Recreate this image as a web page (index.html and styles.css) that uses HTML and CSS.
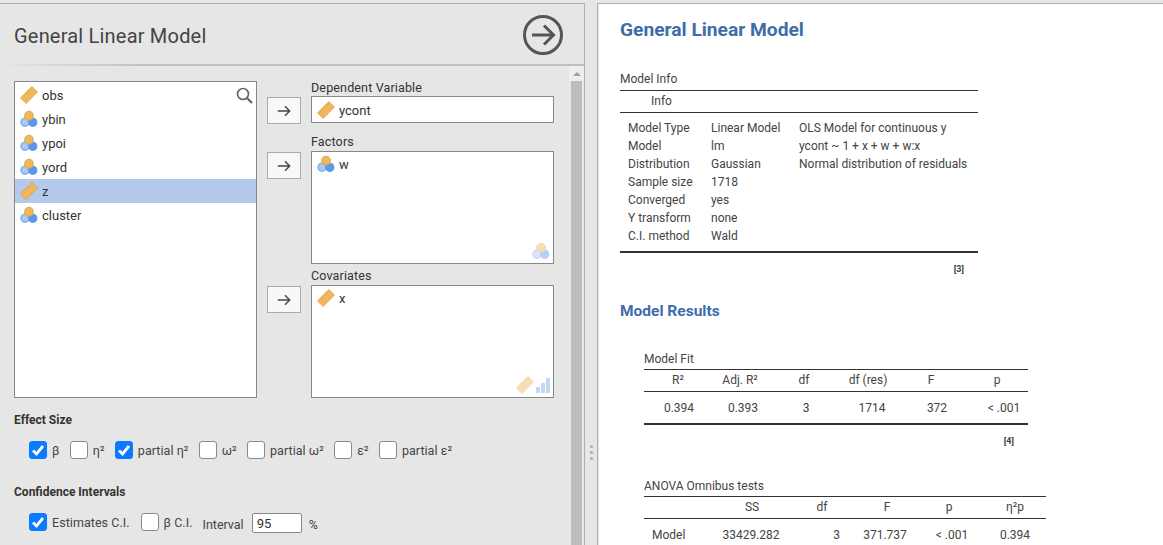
FILE: index.html
```html
<!DOCTYPE html>
<html lang="en">
<head>
    <meta charset="UTF-8">
    <title>General Linear Model</title>
    <link rel="stylesheet" href="styles.css">
</head>
<body>
    <svg class="icon-defs" width="0" height="0">
        <symbol id="ruler" viewBox="0 0 18 18">
            <path d="M11.900 .6 17.400 6.100 6.100 17.400 .6 11.900z" fill="#f0b85c" stroke="#e5a53e" stroke-width="1" stroke-linejoin="round"/>
            <path d="M3.100 9.400 4.500 10.800M5.200 7.300 6.600 8.700M7.300 5.200 8.700 6.600M9.400 3.100 10.800 4.500" stroke="#d9993a" stroke-width=".7"/>
        </symbol>
        <symbol id="nominal" viewBox="0 0 18 18">
            <circle cx="5" cy="12.200" r="4.100" fill="#a9c7f2" stroke="#6f9fe6" stroke-width="1"/>
            <circle cx="12.800" cy="12.300" r="4.100" fill="#5f97e8" stroke="#5f97e8" stroke-width="1"/>
            <circle cx="9" cy="5.700" r="4.400" fill="#edb85f" stroke="#dda648" stroke-width="1"/>
        </symbol>
        <symbol id="move" viewBox="0 0 14 12">
            <path d="M.8 6H12.700M8 1.300 12.700 6 8 10.700" fill="none" stroke="#444" stroke-width="1.400"/>
        </symbol>
        <symbol id="tick" viewBox="0 0 18 18">
            <path d="M4 9.500 7.500 13 14 5" fill="none" stroke="#fff" stroke-width="2.800"/>
        </symbol>
    </svg>

    <div class="app">
        <section class="options">
            <div class="options-head">
                <h1>General Linear Model</h1>
                <svg class="run-icon" width="42" height="42" viewBox="0 0 42 42">
                    <circle cx="21" cy="21" r="18.500" fill="none" stroke="#555" stroke-width="3"/>
                    <path d="M10 21H31M22 11.500 31.500 21 22 30.500" fill="none" stroke="#555" stroke-width="3"/>
                </svg>
            </div>

            <div class="options-body">
                <div class="options-content">
                    <div class="supplier">
                        <div class="var-list">
                            <svg class="search-icon" width="17" height="17" viewBox="0 0 17 17">
                                <circle cx="7" cy="7" r="5.500" fill="none" stroke="#666" stroke-width="1.700"/>
                                <path d="M11 11 16 16" stroke="#666" stroke-width="2.200"/>
                            </svg>
                            <div class="var-row"><svg class="var-icon"><use href="#ruler"/></svg>obs</div>
                            <div class="var-row"><svg class="var-icon"><use href="#nominal"/></svg>ybin</div>
                            <div class="var-row"><svg class="var-icon"><use href="#nominal"/></svg>ypoi</div>
                            <div class="var-row"><svg class="var-icon"><use href="#nominal"/></svg>yord</div>
                            <div class="var-row selected"><svg class="var-icon"><use href="#ruler"/></svg>z</div>
                            <div class="var-row"><svg class="var-icon"><use href="#nominal"/></svg>cluster</div>
                        </div>

                        <div class="targets">
                            <div class="target target-dep">
                                <div class="target-label">Dependent Variable</div>
                                <button class="move-btn" type="button"><svg width="14" height="12"><use href="#move"/></svg></button>
                                <div class="target-box box-dep">
                                    <div class="var-row"><svg class="var-icon"><use href="#ruler"/></svg>ycont</div>
                                </div>
                            </div>
                            <div class="target">
                                <div class="target-label">Factors</div>
                                <button class="move-btn" type="button"><svg width="14" height="12"><use href="#move"/></svg></button>
                                <div class="target-box box-factors">
                                    <div class="var-row"><svg class="var-icon"><use href="#nominal"/></svg>w</div>
                                    <div class="box-hint"><svg class="var-icon"><use href="#nominal"/></svg></div>
                                </div>
                            </div>
                            <div class="target">
                                <div class="target-label">Covariates</div>
                                <button class="move-btn" type="button"><svg width="14" height="12"><use href="#move"/></svg></button>
                                <div class="target-box box-covs">
                                    <div class="var-row"><svg class="var-icon"><use href="#ruler"/></svg>x</div>
                                    <div class="box-hint">
                                        <svg class="var-icon"><use href="#ruler"/></svg>
                                        <svg class="bars-icon" width="14" height="15" viewBox="0 0 14 15">
                                            <path d="M0 9H4V15H0zM5 5H9V15H5zM10 0H14V15H10z" fill="#7ea9ea"/>
                                        </svg>
                                    </div>
                                </div>
                            </div>
                        </div>
                    </div>

                    <h2 class="group-title">Effect Size</h2>
                    <div class="check-row">
                        <label class="check"><span class="box on"><svg width="18" height="18"><use href="#tick"/></svg></span>β</label>
                        <label class="check"><span class="box"></span>η²</label>
                        <label class="check"><span class="box on"><svg width="18" height="18"><use href="#tick"/></svg></span>partial η²</label>
                        <label class="check"><span class="box"></span>ω²</label>
                        <label class="check"><span class="box"></span>partial ω²</label>
                        <label class="check"><span class="box"></span>ε²</label>
                        <label class="check"><span class="box"></span>partial ε²</label>
                    </div>

                    <h2 class="group-title group-ci">Confidence Intervals</h2>
                    <div class="check-row ci-row">
                        <label class="check"><span class="box on"><svg width="18" height="18"><use href="#tick"/></svg></span>Estimates C.I.</label>
                        <label class="check"><span class="box"></span>β C.I.</label>
                        <span class="interval">Interval</span>
                        <input class="interval-input" type="text" value="95">
                        <span class="interval-unit">%</span>
                    </div>
                </div>

                <div class="scrollbar">
                    <div class="scroll-up"><span class="scroll-arrow"></span></div>
                    <div class="scroll-thumb"></div>
                </div>
            </div>
        </section>

        <div class="splitter"><span></span><span></span><span></span></div>

        <section class="results">
            <h1 class="res-title">General Linear Model</h1>

            <div class="res-table table-info">
                <div class="table-name">Model Info</div>
                <table>
                    <colgroup>
                        <col class="info-1"><col class="info-2"><col class="info-3">
                    </colgroup>
                    <thead>
                        <tr><th class="info-head" colspan="3">Info</th></tr>
                    </thead>
                    <tbody>
                        <tr class="first"><td class="c1">Model Type</td><td>Linear Model</td><td>OLS Model for continuous y</td></tr>
                        <tr><td class="c1">Model</td><td>lm</td><td>ycont ~ 1 + x + w + w:x</td></tr>
                        <tr><td class="c1">Distribution</td><td>Gaussian</td><td>Normal distribution of residuals</td></tr>
                        <tr><td class="c1">Sample size</td><td>1718</td><td></td></tr>
                        <tr><td class="c1">Converged</td><td>yes</td><td></td></tr>
                        <tr><td class="c1">Y transform</td><td>none</td><td></td></tr>
                        <tr class="last"><td class="c1">C.I. method</td><td>Wald</td><td></td></tr>
                    </tbody>
                </table>
                <div class="ref">[3]</div>
            </div>

            <h2 class="res-heading">Model Results</h2>

            <div class="res-table table-fit">
                <div class="table-name">Model Fit</div>
                <table class="num-table">
                    <colgroup>
                        <col class="fit-1"><col class="fit-2"><col class="fit-3"><col class="fit-4"><col class="fit-5"><col class="fit-6">
                    </colgroup>
                    <thead>
                        <tr><th>R²</th><th>Adj. R²</th><th>df</th><th>df (res)</th><th>F</th><th>p</th></tr>
                    </thead>
                    <tbody>
                        <tr class="first last"><td>0.394</td><td>0.393</td><td>3</td><td>1714</td><td>372</td><td>&lt; .001</td></tr>
                    </tbody>
                </table>
                <div class="ref">[4]</div>
            </div>

            <div class="res-table table-anova">
                <div class="table-name">ANOVA Omnibus tests</div>
                <table class="num-table">
                    <colgroup>
                        <col class="an-1"><col class="an-2"><col class="an-3"><col class="an-4"><col class="an-5"><col class="an-6">
                    </colgroup>
                    <thead>
                        <tr><th></th><th>SS</th><th>df</th><th>F</th><th>p</th><th>η²p</th></tr>
                    </thead>
                    <tbody>
                        <tr class="first"><td class="row-name">Model</td><td>33429.282</td><td class="an-df">3</td><td>371.737</td><td>&lt; .001</td><td>0.394</td></tr>
                    </tbody>
                </table>
            </div>
        </section>
    </div>
</body>
</html>
```

FILE: styles.css
```css
html, body {
    margin: 0;
    padding: 0;
    height: 100%;
    overflow: hidden;
}

body {
    font-family: Roboto, Arial, sans-serif;
    background-color: #e6e6e6;
    color: #333;
}

.icon-defs {
    display: block;
    height: 0;
}

.app {
    display: flex;
    height: 542px;
    margin-top: 3px;
    overflow: hidden;
}

/* options panel */
.options {
    width: 585px;
    flex: none;
    box-sizing: border-box;
    border-top: 1px solid #b0b0b0;
    border-right: 1px solid #b0b0b0;
}

.options-head {
    display: flex;
    align-items: center;
    justify-content: space-between;
    height: 60px;
    padding: 0 20px 0 14px;
    border-bottom: 2px solid;
    border-image: linear-gradient(to right, #e6e6e6, #c0c0c0 25%) 1;
}

.options-head h1 {
    margin: 3px 0 0;
    font-size: 20px;
    font-weight: 400;
    letter-spacing: .2px;
    color: #444;
}

.run-icon {
    margin-top: 2px;
}

.options-body {
    display: flex;
    height: 480px;
}

.options-content {
    flex: 1;
    padding: 15px 0 0 14px;
    overflow: hidden;
}

.scrollbar {
    width: 15px;
    flex: none;
    background-color: #e8e8e8;
}

.scroll-up {
    height: 15px;
    background-color: #eeeeee;
    display: flex;
    justify-content: center;
    align-items: center;
}

.scroll-arrow {
    width: 0;
    height: 0;
    border-left: 4px solid transparent;
    border-right: 4px solid transparent;
    border-bottom: 4px solid #a0a0a0;
}

.scroll-thumb {
    width: 11px;
    height: 470px;
    margin-left: 2px;
    background-color: #bdbdbd;
}

.supplier {
    display: flex;
    height: 317px;
    gap: 10px;
}

.var-list {
    position: relative;
    width: 243px;
    box-sizing: border-box;
    padding-top: 1px;
    background: white;
    border: 1px solid #888;
}

.search-icon {
    position: absolute;
    top: 5px;
    right: 3px;
}

.var-row {
    display: flex;
    align-items: center;
    height: 24px;
    padding-left: 5px;
    font-size: 13px;
    color: #333;
}

.var-row.selected {
    background-color: #b4c9ec;
}

.var-icon {
    width: 18px;
    height: 18px;
    margin-right: 4px;
    flex: none;
}

.targets {
    display: flex;
    flex-direction: column;
    gap: 5px;
    margin-top: -1px;
}

.target-dep {
    margin-bottom: 6px;
}

.target {
    display: grid;
    grid-template-columns: 34px 243px;
    column-gap: 10px;
    align-items: start;
}

.target-label {
    grid-column: 2;
    height: 16px;
    font-size: 12.500px;
    line-height: 13px;
    letter-spacing: .15px;
}

.target-dep .target-label {
    height: 15px;
    margin-top: 1px;
}

.move-btn {
    width: 34px;
    height: 27px;
    margin-top: 1px;
    padding: 0;
    display: flex;
    align-items: center;
    justify-content: center;
    background-color: #f8f8f8;
    border: 1px solid #aaa;
}

.target-box {
    position: relative;
    box-sizing: border-box;
    background: white;
    border: 1px solid #888;
}

.box-dep {
    height: 27px;
}

.box-dep .var-row {
    height: 25px;
    padding-top: 1px;
    box-sizing: border-box;
}

.box-factors {
    height: 113px;
}

.box-covs {
    height: 113px;
}

.box-hint {
    position: absolute;
    right: 3px;
    bottom: 3px;
    display: flex;
    align-items: flex-end;
    opacity: .45;
}

.box-hint .var-icon {
    margin-right: 0;
}

.bars-icon {
    margin-left: 2px;
    margin-bottom: 1px;
}

.group-title {
    margin: 15px 0 0;
    font-size: 12px;
    line-height: 15px;
    font-weight: 700;
    color: #333;
}

.group-ci {
    margin-top: 25px;
}

.check-row {
    display: flex;
    align-items: center;
    height: 20px;
    margin: 12px 0 0 15px;
}

.check {
    display: flex;
    align-items: center;
    margin-right: 10.300px;
    font-size: 12.500px;
    letter-spacing: .05px;
    color: #444;
}

.ci-row .check {
    margin-right: 11px;
}

.box {
    width: 18px;
    height: 18px;
    box-sizing: border-box;
    flex: none;
    margin-right: 5px;
    background: white;
    border: 1px solid #8a8a8a;
    border-radius: 3px;
    overflow: hidden;
}

.box svg {
    display: block;
    margin: -1px;
}

.box.on {
    background-color: #0a7bff;
    border-color: #0a7bff;
}

.interval {
    font-size: 12.500px;
    color: #444;
    margin: 4px 0 0 -1px;
}

.interval-input {
    width: 50px;
    height: 20px;
    box-sizing: border-box;
    align-self: flex-start;
    margin: 1px 7px 0 8px;
    padding: 0 4px;
    font-family: Roboto, Arial, sans-serif;
    font-size: 13px;
    color: #333;
    border: 1px solid #888;
    border-radius: 2px;
    background: white;
}

.interval-unit {
    font-size: 12.500px;
    color: #444;
    margin-top: 4px;
}

/* drag handle between the panels */
.splitter {
    width: 12px;
    flex: none;
    display: flex;
    flex-direction: column;
    align-items: center;
    gap: 3px;
    padding-top: 442px;
}

.splitter span {
    width: 3px;
    height: 3px;
    border-radius: 50%;
    background-color: #aaa;
}

/* results */
.results {
    flex: 1;
    padding: 14px 0 0 22px;
    background: white;
    border-top: 1px solid #b0b0b0;
    border-left: 1px solid #b0b0b0;
    box-shadow: inset 1px 0 0 #e6e6e6;
    font-size: 12px;
    color: #444;
}

.res-title {
    margin: 0;
    font-size: 19.200px;
    line-height: 24px;
    font-weight: 700;
    color: #3e6da9;
}

.res-heading {
    margin: 26px 0 0;
    font-size: 15.500px;
    line-height: 20px;
    font-weight: 700;
    color: #3e6da9;
}

.res-table table {
    border-collapse: collapse;
    table-layout: fixed;
    width: 100%;
    border-top: 1px solid #333;
}

.table-name {
    height: 16px;
    line-height: 16px;
    padding-bottom: 3px;
}

.table-fit .table-name,
.table-anova .table-name {
    padding-bottom: 2px;
}

.table-info {
    width: 358px;
    margin-top: 29px;
}

.table-fit {
    width: 384px;
    margin: 30px 0 0 24px;
}

.table-anova {
    width: 402px;
    margin: 31px 0 0 24px;
}

th {
    height: 20px;
    padding: 0 0 1px;
    font-weight: 400;
    border-bottom: 1px solid #333;
}

.info-head {
    text-align: left;
    padding-left: 31px;
}

td {
    height: 18px;
    padding: 0;
    white-space: nowrap;
}

tr.first td {
    padding-top: 6px;
}

tr.last td {
    padding-bottom: 6px;
    border-bottom: 2px solid #333;
}

.c1 {
    padding-left: 8px;
}

.info-1 { width: 91px; }
.info-2 { width: 88px; }
.info-3 { width: 179px; }

.num-table th, .num-table td {
    text-align: center;
}

.num-table tr.first td {
    height: 21px;
    padding-top: 5px;
    padding-bottom: 5px;
}

.fit-1 { width: 68px; }
.fit-2 { width: 56px; }
.fit-3 { width: 72px; }
.fit-4 { width: 56px; }
.fit-5 { width: 70px; }
.fit-6 { width: 62px; }

/* values sit a little right of their column headers */
.table-fit td:nth-child(1) { padding-left: 2px; }
.table-fit td:nth-child(2) { padding-left: 6px; }
.table-fit td:nth-child(3) { padding-left: 4px; }
.table-fit td:nth-child(4) { padding-left: 8px; }
.table-fit td:nth-child(5) { padding-left: 12px; }
.table-fit td:nth-child(6) { padding-left: 14px; }

.an-1 { width: 72px; }
.an-2 { width: 72px; }
.an-3 { width: 68px; }
.an-4 { width: 62px; }
.an-5 { width: 62px; }
.an-6 { width: 66px; }

.num-table .row-name {
    text-align: left;
    padding-left: 8px;
}

.num-table .an-df {
    text-align: right;
    padding-right: 16px;
}

.table-anova td:nth-child(2) { padding-right: 2px; }
.table-anova td:nth-child(4) { padding-right: 4px; }
.table-anova td:nth-child(5) { padding-left: 6px; }
.table-anova th:nth-child(6),
.table-anova td:nth-child(6) { padding-left: 4px; }

.ref {
    margin-top: 10px;
    padding-right: 14px;
    text-align: right;
    font-size: 9px;
    line-height: 12px;
    font-weight: 700;
}
```
